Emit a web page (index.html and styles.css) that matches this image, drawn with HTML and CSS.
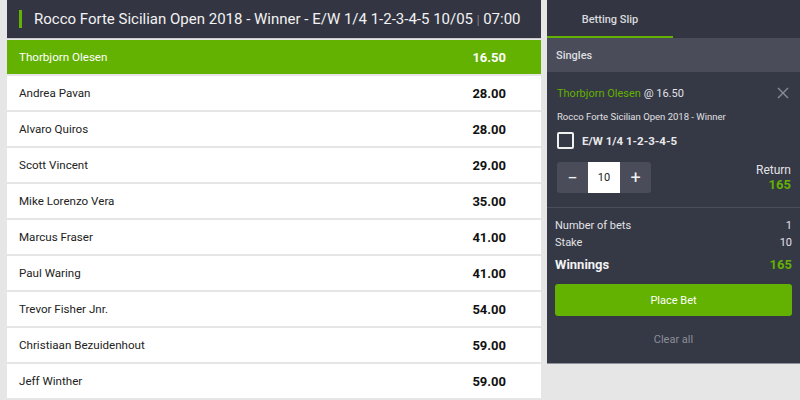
FILE: index.html
```html
<!DOCTYPE html>
<html lang="en">
<head>
    <meta charset="UTF-8">
    <title>Rocco Forte Sicilian Open 2018 - Winner</title>
    <link rel="stylesheet" href="styles.css">
</head>
<body>
    <div class="page">
        <div class="market">
            <div class="market-header">
                <span class="market-mark"></span>
                <span class="market-title">Rocco Forte Sicilian Open 2018 - Winner - E/W 1/4 1-2-3-4-5 10/05 <span class="sep">|</span> 07:00</span>
            </div>
            <div class="runner selected"><span>Thorbjorn Olesen</span><span class="odds">16.50</span></div>
            <div class="runner"><span>Andrea Pavan</span><span class="odds">28.00</span></div>
            <div class="runner"><span>Alvaro Quiros</span><span class="odds">28.00</span></div>
            <div class="runner"><span>Scott Vincent</span><span class="odds">29.00</span></div>
            <div class="runner"><span>Mike Lorenzo Vera</span><span class="odds">35.00</span></div>
            <div class="runner"><span>Marcus Fraser</span><span class="odds">41.00</span></div>
            <div class="runner"><span>Paul Waring</span><span class="odds">41.00</span></div>
            <div class="runner"><span>Trevor Fisher Jnr.</span><span class="odds">54.00</span></div>
            <div class="runner"><span>Christiaan Bezuidenhout</span><span class="odds">59.00</span></div>
            <div class="runner"><span>Jeff Winther</span><span class="odds">59.00</span></div>
        </div>

        <div class="slip">
            <div class="slip-tabs">
                <div class="slip-tab">Betting Slip</div>
            </div>
            <div class="slip-type">Singles</div>
            <div class="bet">
                <div class="bet-top">
                    <div class="bet-pick"><span class="pick-name">Thorbjorn Olesen</span> @ 16.50</div>
                    <svg class="bet-close" width="12" height="12" viewBox="0 0 12 12">
                        <path d="M1 1 L11 11 M11 1 L1 11" stroke="#8a8d96" stroke-width="1.4" fill="none"/>
                    </svg>
                </div>
                <div class="bet-market">Rocco Forte Sicilian Open 2018 - Winner</div>
                <label class="ew">
                    <span class="ew-box"></span>
                    <span>E/W 1/4 1-2-3-4-5</span>
                </label>
                <div class="bet-stake">
                    <div class="stepper">
                        <span class="step">&minus;</span>
                        <span class="stake-input">10</span>
                        <span class="step">+</span>
                    </div>
                    <div class="return">
                        <div>Return</div>
                        <div class="green-num">165</div>
                    </div>
                </div>
            </div>
            <div class="summary">
                <div class="sum-row"><span>Number of bets</span><span>1</span></div>
                <div class="sum-row"><span>Stake</span><span>10</span></div>
                <div class="sum-row total"><span>Winnings</span><span class="green-num">165</span></div>
                <button class="place-bet">Place Bet</button>
                <div class="clear-all">Clear all</div>
            </div>
        </div>
    </div>
</body>
</html>
```

FILE: styles.css
```css
body {
    margin: 0;
    background-color: #e6e6e6;
    font-family: Roboto, "Liberation Sans", sans-serif;
    overflow: hidden;
}
.page {
    display: flex;
    align-items: flex-start;
    gap: 6px;
    padding-left: 7px;
}
.market {
    width: 534px;
    display: flex;
    flex-direction: column;
    gap: 2px;
}
.market-header {
    height: 38px;
    background-color: #333642;
    display: flex;
    align-items: center;
    margin-bottom: -1px;
    border-bottom: 1px solid #c9cacd;
}
.market-mark {
    width: 3px;
    height: 18px;
    background-color: #63b100;
    margin: 0 12px 0 12px;
}
.market-title {
    color: #f2f2f2;
    font-size: 15px;
}
.market-title .sep {
    color: #a9aab0;
    font-size: 12px;
    font-weight: 300;
}
.runner {
    height: 34px;
    background-color: #fff;
    display: flex;
    align-items: center;
    justify-content: space-between;
    padding: 0 35px 0 12px;
    font-size: 11.6px;
    color: #222;
}
.runner .odds {
    font-weight: bold;
    font-size: 13px;
    color: #111;
}
.runner.selected {
    background-color: #63b100;
    color: #fff;
}
.runner.selected .odds {
    color: #fff;
}
.slip {
    width: 253px;
    background-color: #353845;
    color: #e8e8ea;
    border-bottom: 1px solid #8e909a;
}
.slip-tabs {
    height: 38px;
    background-color: #333642;
    display: flex;
}
.slip-tab {
    width: 126px;
    display: flex;
    align-items: center;
    justify-content: center;
    font-size: 11px;
    font-weight: 500;
    color: #d9dadd;
    border-bottom: 2px solid #63b100;
    box-sizing: border-box;
    padding-top: 2px;
}
.slip-type {
    height: 34px;
    background-color: #4a4d59;
    display: flex;
    align-items: center;
    padding-left: 9px;
    font-size: 11px;
    font-weight: 500;
    color: #dcdde0;
}
.bet {
    padding: 12px 9px 14px 10px;
    border-bottom: 1px solid #4b4e5a;
}
.bet-top {
    display: flex;
    justify-content: space-between;
    align-items: center;
    height: 18px;
}
.bet-pick {
    font-size: 11px;
    color: #e2e2e5;
}
.pick-name {
    color: #63b100;
}
.bet-close {
    margin-right: 2px;
}
.bet-market {
    font-size: 9.5px;
    margin-top: 9px;
    color: #e0e0e3;
}
.ew {
    display: flex;
    align-items: center;
    gap: 8px;
    margin-top: 10px;
    font-size: 11.5px;
    font-weight: bold;
}
.ew-box {
    width: 13px;
    height: 13px;
    border: 2px solid #f0f0f0;
    border-radius: 2px;
}
.bet-stake {
    display: flex;
    justify-content: space-between;
    align-items: center;
    margin-top: 13px;
}
.stepper {
    display: flex;
    background-color: #4a4d59;
    border-radius: 3px;
    height: 31px;
}
.step {
    width: 31px;
    display: flex;
    align-items: center;
    justify-content: center;
    font-size: 18px;
    color: #f2f2f2;
}
.stake-input {
    width: 32px;
    background-color: #fff;
    color: #222;
    display: flex;
    align-items: center;
    justify-content: center;
    font-size: 11px;
}
.return {
    text-align: right;
    font-size: 12px;
    color: #e2e2e5;
}
.return .green-num {
    font-size: 13px;
}
.green-num {
    color: #63b100;
    font-weight: bold;
    font-size: 12px;
}
.summary {
    padding: 9px 8px 0 8px;
}
.sum-row {
    display: flex;
    justify-content: space-between;
    font-size: 11px;
    height: 17px;
    align-items: center;
    color: #e2e2e5;
}
.sum-row.total {
    font-size: 13px;
    font-weight: bold;
    height: 24px;
    margin-top: 1px;
    color: #f2f2f2;
}
.sum-row.total .green-num {
    font-size: 13px;
}
.place-bet {
    display: block;
    width: 100%;
    height: 32px;
    margin-top: 8px;
    background-color: #63b100;
    border: none;
    border-radius: 3px;
    color: #fff;
    font-family: inherit;
    font-size: 11px;
}
.clear-all {
    text-align: center;
    font-size: 11px;
    color: #8c8e97;
    padding: 17px 0 17px;
}
```
